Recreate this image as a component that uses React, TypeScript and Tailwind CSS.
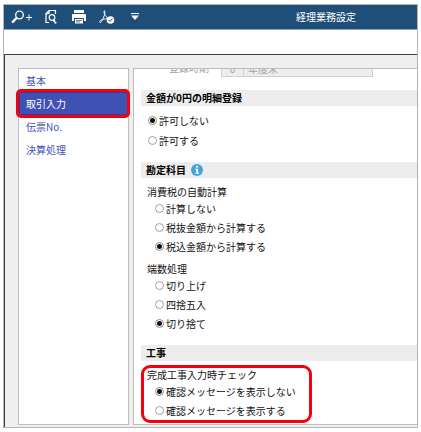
import type { ReactNode } from "react";

const menu = ["基本", "取引入力", "伝票No.", "決算処理"];

function ToolButton({ label, children }: { label: string; children: ReactNode }) {
  return (
    <button type="button" aria-label={label} className="shrink-0">
      {children}
    </button>
  );
}

function SectionTitle({ children }: { children: ReactNode }) {
  return (
    <h2 className="flex h-4 items-center gap-[5px] bg-[#ededed] pl-[5px] font-bold text-black">{children}</h2>
  );
}

type RadioProps = { name: string; label: string; checked?: boolean };

function Radio({ name, label, checked }: RadioProps) {
  return (
    <label className="flex h-[19px] items-center gap-[2px]">
      <input
        type="radio"
        name={name}
        defaultChecked={checked}
        className="size-[9px] shrink-0 appearance-none rounded-full border border-[#a0a0a0] bg-white checked:border-[#8c8c8c] checked:bg-[radial-gradient(circle,#111_2px,#fff_3px)]"
      />
      {label}
    </label>
  );
}

export default function App() {
  return (
    <div className="bg-white px-[3px] pt-1 pb-[3px] font-['Noto_Sans_CJK_JP',sans-serif] text-[10px] leading-[14px] text-[#111]">
      <div className="border border-[#b4b4b4]">
        {/* Title bar */}
        <header className="flex h-[25px] items-center border-b border-[#8da5ba] bg-[#1f4e79] pl-[7px] text-white">
          <div className="flex flex-1 items-center gap-3">
            <ToolButton label="拡大">
              <svg width="22" height="16" viewBox="0 0 22 16" fill="none" stroke="currentColor">
                <circle cx="8.500" cy="6" r="3.800" strokeWidth="1.300" />
                <path d="M5.500 9 1.800 12.800" strokeWidth="2.400" strokeLinecap="round" />
                <path d="M15 8.500h6M18 5.500v6" />
              </svg>
            </ToolButton>
            <ToolButton label="プレビュー">
              <svg width="14" height="16" viewBox="0 0 14 16" fill="none" stroke="currentColor" strokeWidth="1.200">
                <path d="M4 13.500H1V4.500L4 1.500h6.500V5M1 5l3-.5v-3" />
                <circle cx="7" cy="8.500" r="2.800" />
                <path d="m8.500 11 2.500 3.500" strokeWidth="2" />
              </svg>
            </ToolButton>
            <ToolButton label="印刷">
              <svg width="16" height="16" viewBox="0 0 16 16" fill="currentColor">
                <path d="M3 1h10v3H3zM2 5h12a1 1 0 0 1 1 1v6h-2V9H3v3H1V6a1 1 0 0 1 1-1zM4 10h8v4.500H4z" />
                <path d="M5 11.500h6M5 13h4" stroke="#1f4e79" strokeWidth=".700" />
              </svg>
            </ToolButton>
            <ToolButton label="PDF">
              <svg width="16" height="16" viewBox="0 0 16 16" fill="none" stroke="currentColor">
                <path d="M5.500 1.500c1 2 .2 4-.8 6.500S2.500 13 1.300 13.500C.3 13.500.5 12 2 11.200c2-1 4-1.400 6-1.500M5 2c-.3 3 1.500 5.500 4 7" strokeWidth=".900" />
                <circle cx="11.500" cy="11" r="3.800" fill="currentColor" stroke="none" />
                <path d="m9.500 11 1.500 1.500 2.500-3" stroke="#1f4e79" />
              </svg>
            </ToolButton>
            <button type="button" aria-label="その他" className="ml-1">
              <svg width="8" height="8" viewBox="0 0 8 8" fill="currentColor">
                <path d="M0 0h8v1H0zM0 2.500h8L4 7z" />
              </svg>
            </button>
          </div>
          <h1 className="w-[121px]">経理業務設定</h1>
        </header>

        <div className="h-6" />

        <div className="flex gap-1 border-t border-l border-[#404040] bg-[#efefef] pt-[13px] pb-[2px] pl-[13px]">
          {/* Menu */}
          <nav className="w-[111px] shrink-0 border border-[#bdbdbd] bg-white">
            {menu.map((item) =>
              item === "取引入力" ? (
                <a key={item} href="#" aria-current="page" className="relative flex h-[23px] items-center border border-dotted border-[#1c2c7c] bg-[#3f51b5] pl-[6px] text-white">
                  {item}
                  <span className="absolute -inset-y-1 -right-[3px] -left-1 rounded-[5px] border-3 border-[#f5000f]" />
                </a>
              ) : (
                <a key={item} href="#" className="flex h-[23px] items-center pl-[7px] text-[#3f51b5]">
                  {item}
                </a>
              )
            )}
          </nav>

          {/* Settings */}
          <main className="min-w-0 flex-1 overflow-hidden border border-r-0 border-[#bdbdbd] bg-white pb-1 pl-[7px]">
            {/* Row scrolled partly out of view */}
            <div className="-mt-[10px] flex h-[18px] items-center text-[#a0a0a0]">
              <label htmlFor="timing" className="w-20 pl-7">登録時期</label>
              <input id="timing" disabled defaultValue="0" className="h-[18px] w-[23px] border border-[#cfcfcf] bg-[#ededed] text-center" />
              <input aria-label="登録時期の名称" disabled defaultValue="年度末" className="h-[18px] w-[129px] border border-l-0 border-[#cfcfcf] bg-[#ededed] pl-1" />
            </div>

            <section className="mt-[13px]">
              <SectionTitle>金額が0円の明細登録</SectionTitle>
              <div className="flex flex-col gap-[1px] pt-[5px] pl-[7px]">
                <Radio name="zero" label="許可しない" checked />
                <Radio name="zero" label="許可する" />
              </div>
            </section>

            <section className="mt-3">
              <SectionTitle>
                勘定科目
                <svg width="12" height="12" viewBox="0 0 11 11" role="img" aria-label="情報">
                  <circle cx="5.500" cy="5.500" r="5.500" fill="#41a5d8" />
                  <path d="M4.500 1.800h2v1.500h-2zM4 4.400h2.500v3.600H7.500v1H4v-1h.8V5.400H4z" fill="#fff" />
                </svg>
              </SectionTitle>
              <div className="flex flex-col gap-[6px] pt-[7px] pl-[6px]">
                <div role="radiogroup" aria-label="消費税の自動計算">
                  <p>消費税の自動計算</p>
                  <div className="pl-2">
                    <Radio name="tax" label="計算しない" />
                    <Radio name="tax" label="税抜金額から計算する" />
                    <Radio name="tax" label="税込金額から計算する" checked />
                  </div>
                </div>
                <div role="radiogroup" aria-label="端数処理">
                  <p>端数処理</p>
                  <div className="pl-2">
                    <Radio name="round" label="切り上げ" />
                    <Radio name="round" label="四捨五入" />
                    <Radio name="round" label="切り捨て" checked />
                  </div>
                </div>
              </div>
            </section>

            <section className="mt-3">
              <SectionTitle>工事</SectionTitle>
              <div className="relative mt-[7px] w-[171px] pl-[6px]" role="radiogroup" aria-label="完成工事入力時チェック">
                <p>完成工事入力時チェック</p>
                <div className="pl-2">
                  <Radio name="check" label="確認メッセージを表示しない" checked />
                  <Radio name="check" label="確認メッセージを表示する" />
                </div>
                <span className="pointer-events-none absolute -inset-y-[3px] inset-x-0 rounded-[9px] border-3 border-[#f5000f]" />
              </div>
            </section>
          </main>
        </div>
      </div>
    </div>
  );
}
